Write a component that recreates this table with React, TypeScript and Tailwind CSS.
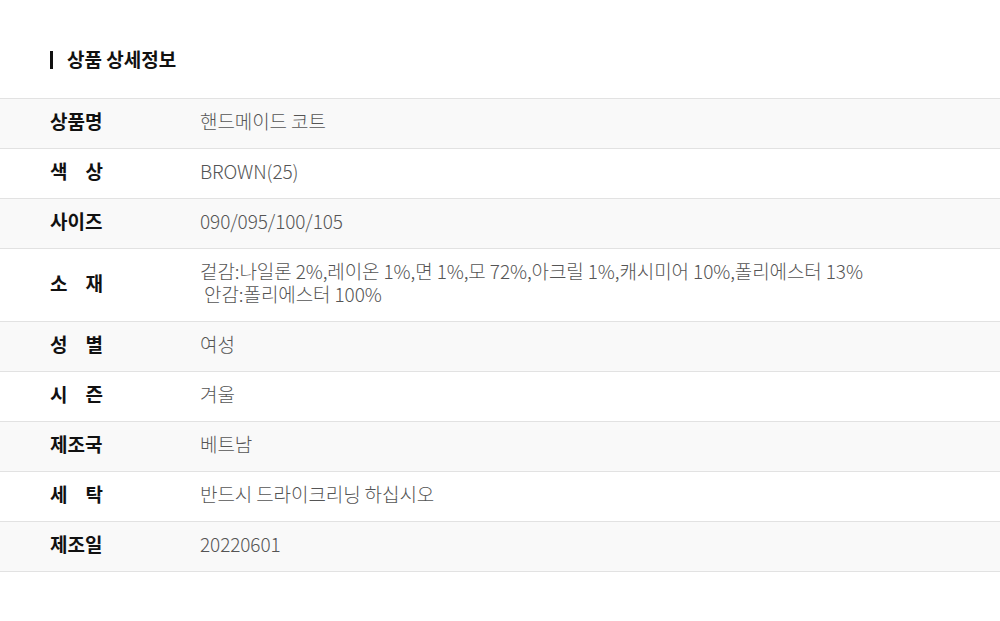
import React from 'react';

const rows: { label: string[]; value: string[] }[] = [
  { label: ['상품명'], value: ['핸드메이드 코트'] },
  { label: ['색', '상'], value: ['BROWN(25)'] },
  { label: ['사이즈'], value: ['090/095/100/105'] },
  {
    label: ['소', '재'],
    value: [
      '겉감:나일론 2%,레이온 1%,면 1%,모 72%,아크릴 1%,캐시미어 10%,폴리에스터 13%',
      '\u00a0안감:폴리에스터 100%',
    ],
  },
  { label: ['성', '별'], value: ['여성'] },
  { label: ['시', '즌'], value: ['겨울'] },
  { label: ['제조국'], value: ['베트남'] },
  { label: ['세', '탁'], value: ['반드시 드라이크리닝 하십시오'] },
  { label: ['제조일'], value: ['20220601'] },
];

function App() {
  return (
    <div
      className="min-h-screen bg-white pt-[48px]"
      style={{ fontFamily: '"Noto Sans CJK KR", "Noto Sans", sans-serif' }}
    >
      <div className="flex items-center px-[50px] mb-[27px]">
        <span className="w-[3px] h-[18px] bg-[#111] mr-[14px]" />
        <h2 className="text-[19px] leading-[23px] font-bold text-[#111] -translate-y-[1px]">상품 상세정보</h2>
      </div>

      <div className="border-t border-[#e2e2e2]">
        {rows.map((row, i) => (
          <div
            key={i}
            className={
              'flex items-center border-b border-[#e2e2e2] pt-[10px] pb-[16px] ' +
              (i % 2 === 0 ? 'bg-[#f9f9f9]' : 'bg-white')
            }
          >
            <div className="w-[200px] pl-[50px] shrink-0">
              <div className="flex justify-between w-[53px] whitespace-nowrap text-[19px] leading-[23px] font-bold text-[#111]">
                {row.label.map((c, j) => (
                  <span key={j}>{c}</span>
                ))}
              </div>
            </div>
            <div className="text-[19px] leading-[23px] font-light text-[#555] tracking-[-0.1px] whitespace-nowrap">
              {row.value.map((v, j) => (
                <div key={j}>{v}</div>
              ))}
            </div>
          </div>
        ))}
      </div>
    </div>
  );
}

export default App;
